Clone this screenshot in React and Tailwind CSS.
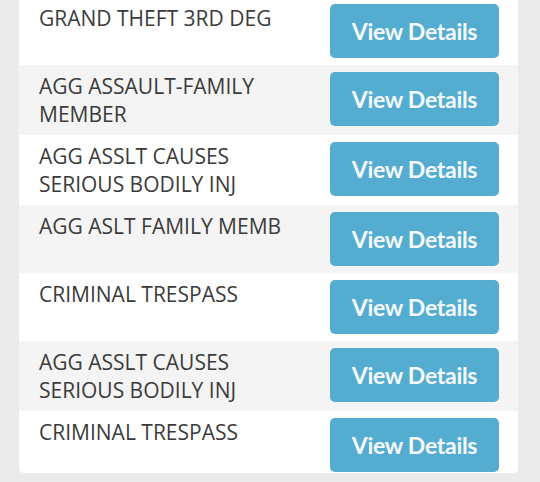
import React from 'react';

const charges = [
  'GRAND THEFT 3RD DEG',
  'AGG ASSAULT-FAMILY MEMBER',
  'AGG ASSLT CAUSES SERIOUS BODILY INJ',
  'AGG ASLT FAMILY MEMB',
  'CRIMINAL TRESPASS',
  'AGG ASSLT CAUSES SERIOUS BODILY INJ',
  'CRIMINAL TRESPASS',
];

function ChargeRow({ name, shaded, last }) {
  return (
    <div
      className={`flex items-start justify-between pl-[20px] pr-[19px] pt-[7px] ${
        last ? 'pb-[1px]' : 'pb-[7px]'
      } ${shaded ? 'bg-[#f4f4f4]' : 'bg-white'}`}
    >
      <div className="w-[280px] text-[21px] leading-[28px] text-[#3b3b3b] font-['Open_Sans',sans-serif]">
        {name}
      </div>
      <button className="w-[169px] h-[54px] shrink-0 rounded-[5px] bg-[#55acd1] text-[#f4fafd] text-[23px] font-bold tracking-[-0.3px] font-['Lato',sans-serif]">
        View Details
      </button>
    </div>
  );
}

export default function App() {
  return (
    <div className="h-[482px] w-[540px] overflow-hidden bg-[#ebebeb] pl-[19px] pr-[22px]">
      <div className="-mt-[3px] overflow-hidden rounded-b-[5px] bg-white">
        {charges.map((name, i) => (
          <ChargeRow key={i} name={name} shaded={i % 2 === 1} last={i === charges.length - 1} />
        ))}
      </div>
    </div>
  );
}
